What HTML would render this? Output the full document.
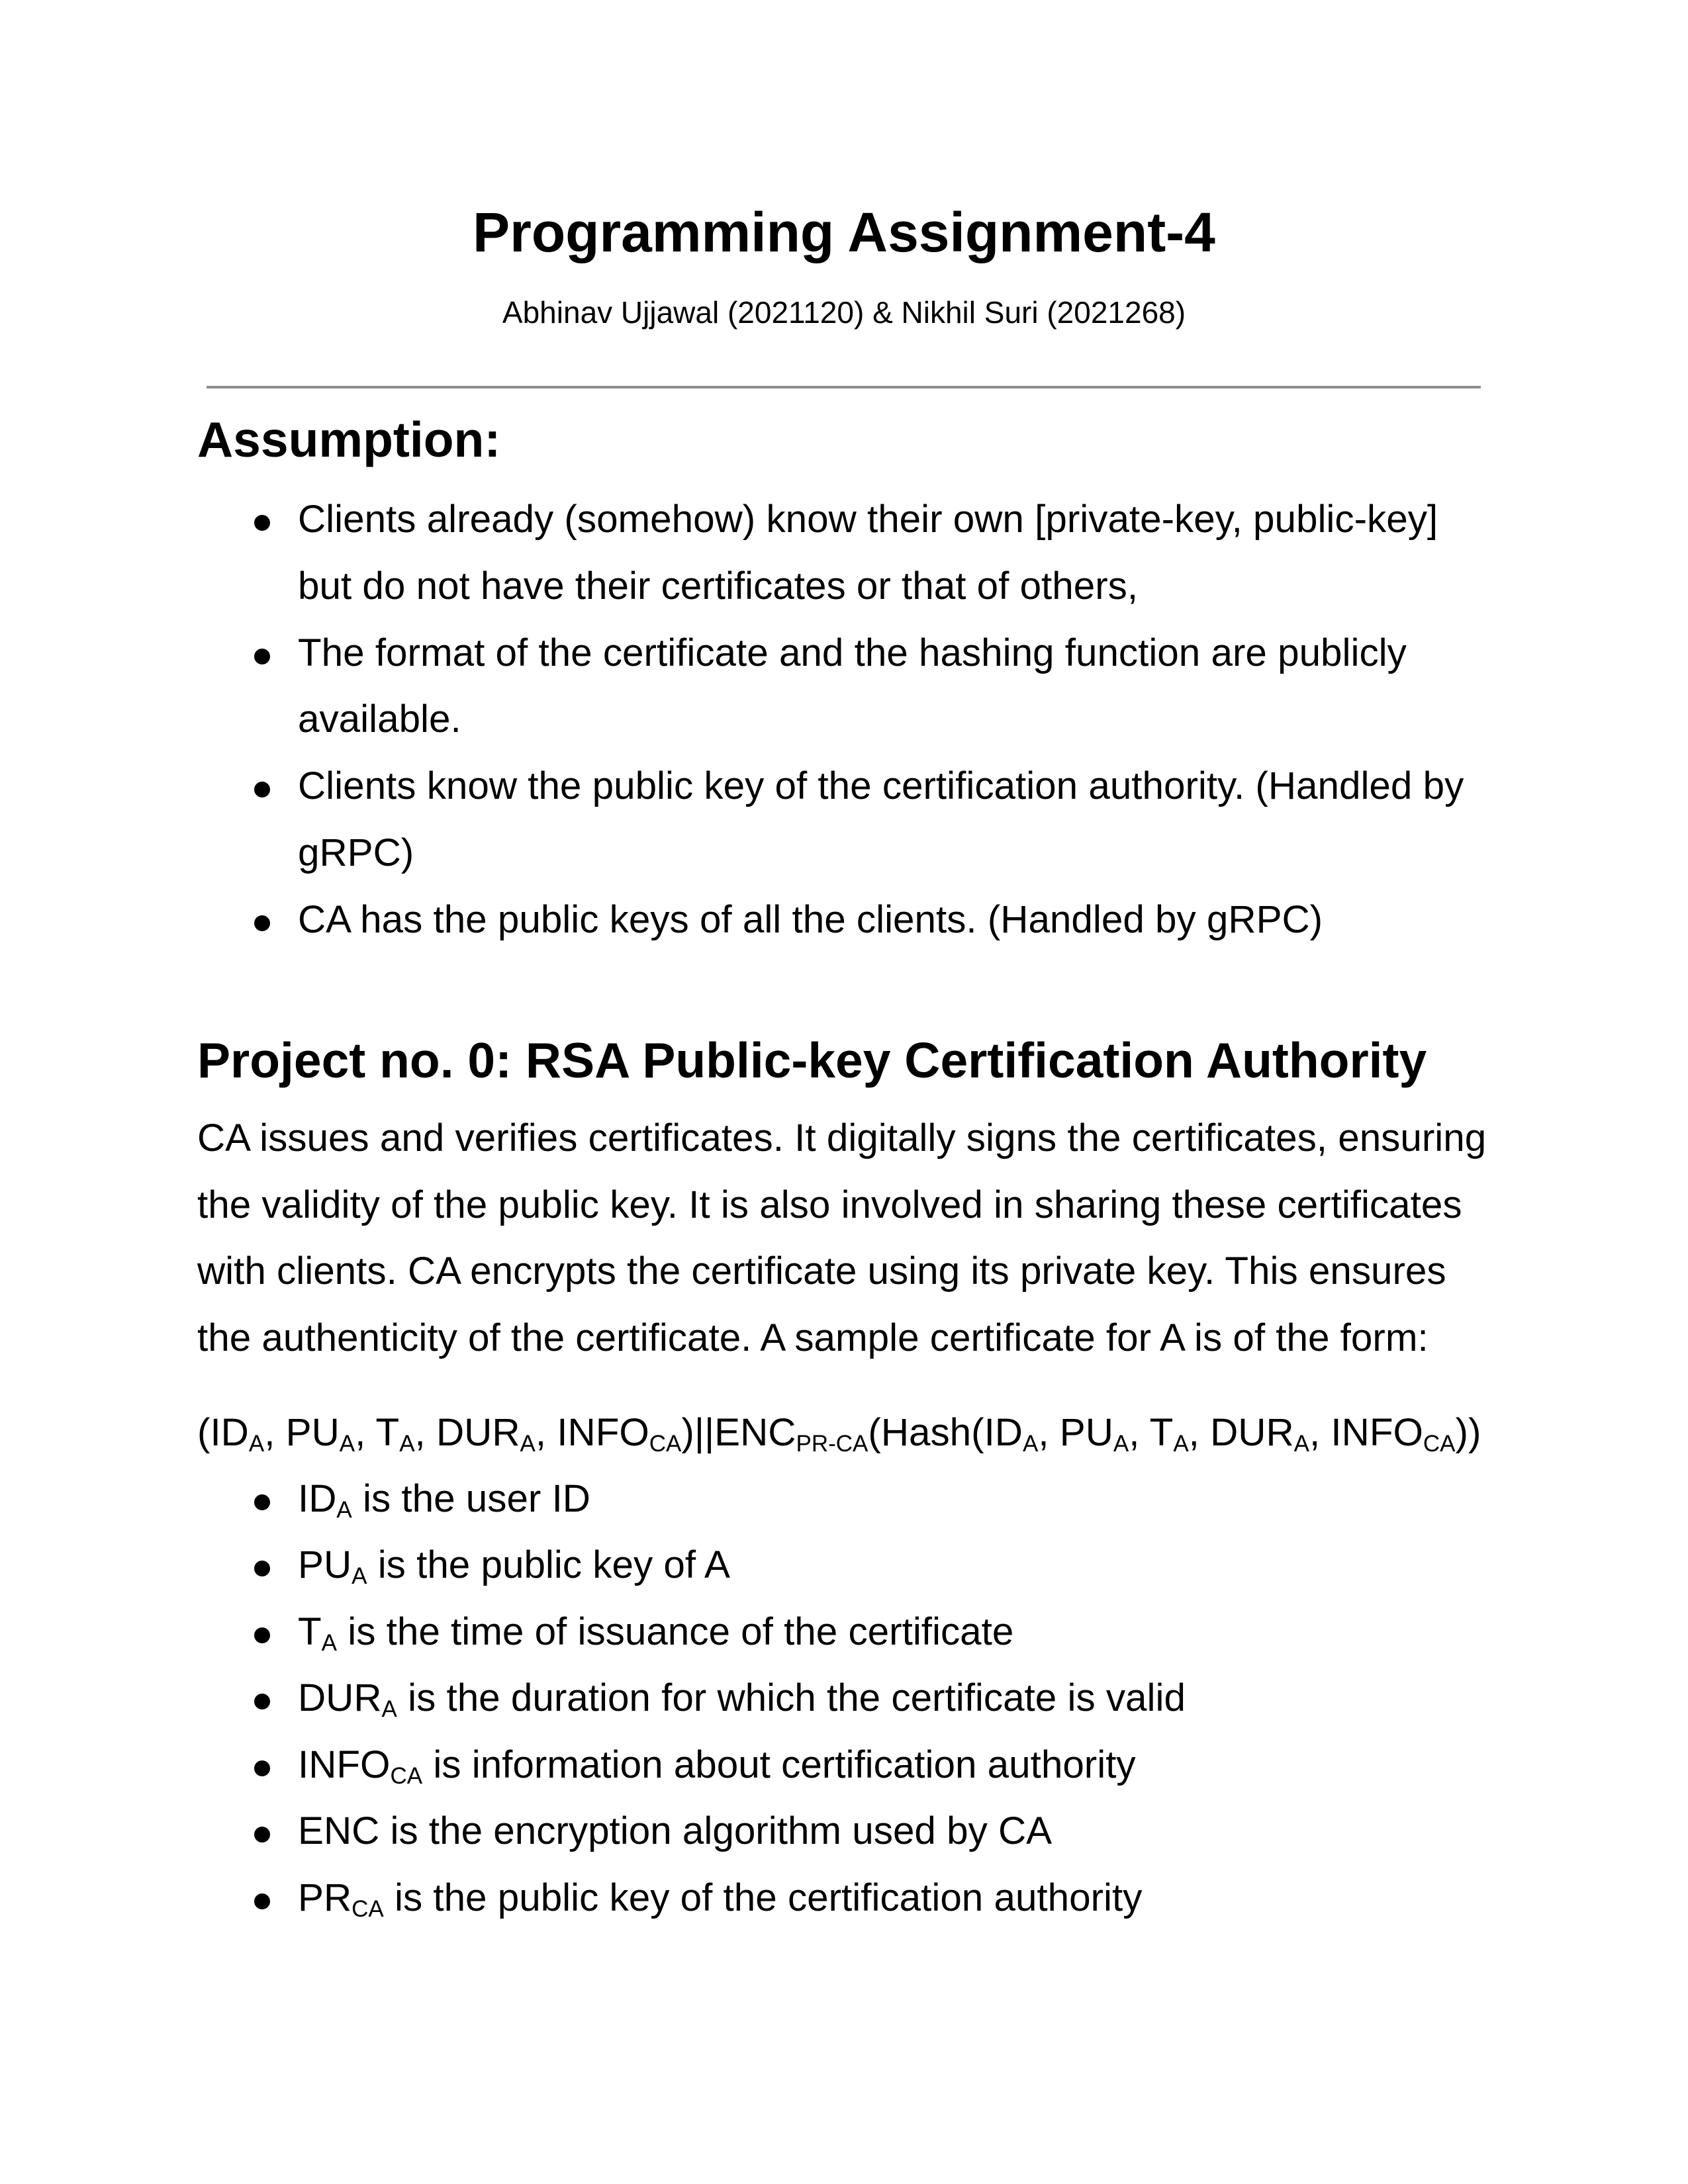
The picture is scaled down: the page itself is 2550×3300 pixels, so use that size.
<!DOCTYPE html>
<html><head><meta charset="utf-8"><style>
html,body{margin:0;padding:0;background:#fff;}
body{width:2550px;height:3300px;position:relative;overflow:hidden;font-family:"Liberation Sans",Arial,sans-serif;color:#000;}
.l{position:absolute;white-space:nowrap;line-height:1;}
.b{font-size:58.4px;}
.t{left:450px;}
.p{left:298px;}
.d{position:absolute;left:384px;width:24px;height:24px;border-radius:50%;background:#000;}
sub{font-size:35px;vertical-align:-9px;line-height:0;}
</style></head><body>
<div class="l" style="left:0;width:2550px;text-align:center;top:309px;font-size:84px;font-weight:bold;">Programming Assignment-4</div>
<div class="l" style="left:0;width:2550px;text-align:center;top:449px;font-size:46px;">Abhinav Ujjawal (2021120) &amp; Nikhil Suri (2021268)</div>
<div style="position:absolute;left:312px;top:583px;width:1925px;height:4px;background:#8c8c8c;"></div>
<div class="l p" style="top:627px;font-size:75px;font-weight:bold;">Assumption:</div>

<div class="d" style="top:778px"></div>
<div class="l b t" style="top:756px">Clients already (somehow) know their own [private-key, public-key]</div>
<div class="l b t" style="top:857px">but do not have their certificates or that of others,</div>
<div class="d" style="top:980px"></div>
<div class="l b t" style="top:958px">The format of the certificate and the hashing function are publicly</div>
<div class="l b t" style="top:1058px">available.</div>
<div class="d" style="top:1181px"></div>
<div class="l b t" style="top:1159px">Clients know the public key of the certification authority. (Handled by</div>
<div class="l b t" style="top:1260px">gRPC)</div>
<div class="d" style="top:1383px"></div>
<div class="l b t" style="top:1361px">CA has the public keys of all the clients. (Handled by gRPC)</div>

<div class="l p" style="top:1565px;font-size:75px;font-weight:bold;">Project no. 0: RSA Public-key Certification Authority</div>
<div class="l b p" style="top:1691px">CA issues and verifies certificates. It digitally signs the certificates, ensuring</div>
<div class="l b p" style="top:1792px">the validity of the public key. It is also involved in sharing these certificates</div>
<div class="l b p" style="top:1892px">with clients. CA encrypts the certificate using its private key. This ensures</div>
<div class="l b p" style="top:1993px">the authenticity of the certificate. A sample certificate for A is of the form:</div>
<div class="l b p" style="top:2136px">(ID<sub>A</sub>, PU<sub>A</sub>, T<sub>A</sub>, DUR<sub>A</sub>, INFO<sub>CA</sub>)||ENC<sub>PR-CA</sub>(Hash(ID<sub>A</sub>, PU<sub>A</sub>, T<sub>A</sub>, DUR<sub>A</sub>, INFO<sub>CA</sub>))</div>

<div class="d" style="top:2258px"></div><div class="l b t" style="top:2236px">ID<sub>A</sub> is the user ID</div>
<div class="d" style="top:2358px"></div><div class="l b t" style="top:2336px">PU<sub>A</sub> is the public key of A</div>
<div class="d" style="top:2459px"></div><div class="l b t" style="top:2437px">T<sub>A</sub> is the time of issuance of the certificate</div>
<div class="d" style="top:2559px"></div><div class="l b t" style="top:2537px">DUR<sub>A</sub> is the duration for which the certificate is valid</div>
<div class="d" style="top:2660px"></div><div class="l b t" style="top:2638px">INFO<sub>CA</sub> is information about certification authority</div>
<div class="d" style="top:2760px"></div><div class="l b t" style="top:2738px">ENC is the encryption algorithm used by CA</div>
<div class="d" style="top:2861px"></div><div class="l b t" style="top:2839px">PR<sub>CA</sub> is the public key of the certification authority</div>
</body></html>
